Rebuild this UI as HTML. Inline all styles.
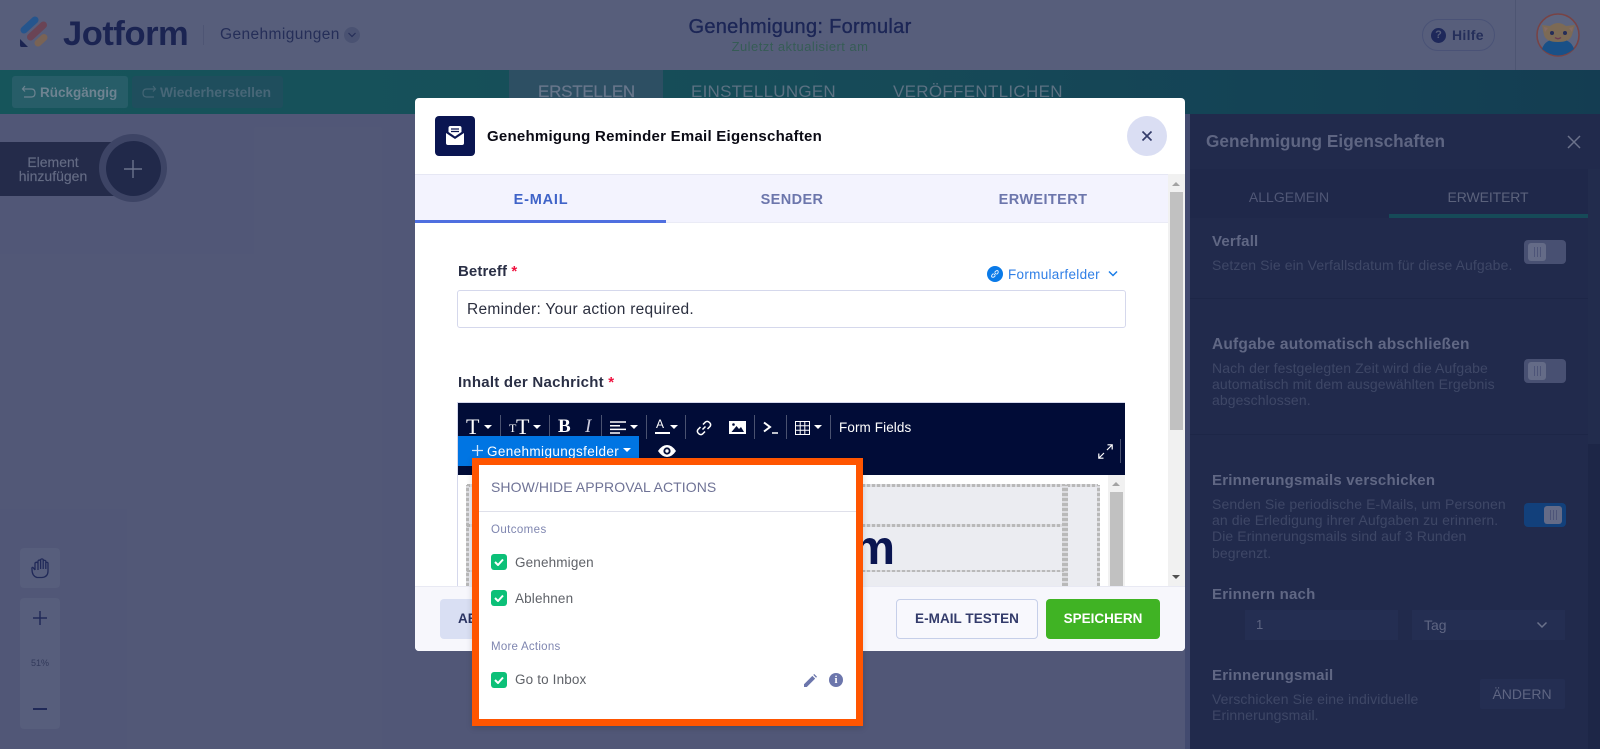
<!DOCTYPE html>
<html lang="de"><head><meta charset="utf-8"><title>Jotform Genehmigung</title>
<style>
html,body{margin:0;padding:0}
body{width:1600px;height:749px;overflow:hidden;position:relative;background:#5e6589;font-family:"Liberation Sans",sans-serif}
div,span,svg{position:absolute}
.t{white-space:nowrap;line-height:20px}
.c{transform:translateX(-50%)}
.b{font-weight:bold}
.sep{width:1px;height:24px;top:415px;background:#4a5270}
.caret{width:0;height:0;border-left:4.5px solid transparent;border-right:4.5px solid transparent;border-top:4.5px solid #fff;top:425px}
.ph{color:#6f7798;font-size:15px;font-weight:bold;letter-spacing:.2px}
.pd{color:#485276;font-size:14px;line-height:16.2px;white-space:nowrap;letter-spacing:.1px}
.tog{width:42px;height:24px;border-radius:4px;background:#535c83}
.tog i{position:absolute;left:4px;top:3px;width:18px;height:18px;border-radius:3px;display:block;background:repeating-linear-gradient(90deg,#59618a 0 1px,transparent 1px 3px) center/7px 10px no-repeat,#737b9b}
.cb{width:16px;height:16px;border-radius:3px;background:#0cc078;left:491px}
.lb{left:515px;color:#5f6268;font-size:13.5px;letter-spacing:.15px}
.dh{height:3px;background:repeating-linear-gradient(90deg,#b9b9b9 0 3px,#dcdce0 3px 5px)}
.dv{width:3px;background:repeating-linear-gradient(0deg,#b9b9b9 0 3px,#dcdce0 3px 5px)}
</style></head><body>

<!-- header -->
<div style="left:0;top:0;width:1600px;height:70px;background:#646d8e"></div>
<svg style="left:18px;top:15px" width="30" height="34" viewBox="0 0 30 34">
<path d="M6 15 L17 5" stroke="#2b62a3" stroke-width="7" stroke-linecap="round"/>
<path d="M12.5 22 L25.5 10" stroke="#7a4f62" stroke-width="7" stroke-linecap="round"/>
<path d="M20 28 L26 22.5" stroke="#8b7262" stroke-width="7" stroke-linecap="round"/>
<path d="M2 24 L10 32 H3.5 Q2 32 2 30 Z" fill="#1f2a5e"/>
</svg>
<div class="t b" style="left:63px;top:19px;font-size:34.5px;line-height:30px;color:#1f2a5f;letter-spacing:-.45px">Jotform</div>
<div style="left:203px;top:25px;width:1px;height:20px;background:#5a6286"></div>
<div class="t" style="left:220px;top:25px;font-size:15.5px;color:#2b3566;letter-spacing:.4px">Genehmigungen</div>
<div style="left:344px;top:27px;width:16px;height:16px;border-radius:50%;background:#565f83"></div>
<svg style="left:347px;top:31px" width="10" height="8" viewBox="0 0 10 8"><path d="M1.5 2 L5 5.5 L8.5 2" fill="none" stroke="#2b3566" stroke-width="1.2"/></svg>
<div class="t c" style="left:800px;top:17px;font-size:20px;color:#212c63;letter-spacing:.3px;-webkit-text-stroke:.35px #212c63">Genehmigung: Formular</div>
<div class="t c" style="left:800px;top:37px;font-size:13px;color:#3f6a63;letter-spacing:.45px">Zuletzt aktualisiert am</div>
<div style="left:1422px;top:19px;width:71px;height:30px;border:1px solid #555f88;border-radius:16px"></div>
<div style="left:1431px;top:28px;width:15px;height:15px;border-radius:50%;background:#232e68;color:#646d8e;font-size:11px;line-height:15px;text-align:center;font-weight:bold">?</div>
<div class="t b" style="left:1452px;top:25px;font-size:14px;color:#2b3668;letter-spacing:.3px">Hilfe</div>
<div style="left:1515px;top:0;width:1px;height:70px;background:#596283"></div>
<svg style="left:1536px;top:13px" width="44" height="44" viewBox="0 0 44 44">
<circle cx="22" cy="22" r="21" fill="#6b7494" stroke="#8a4e50" stroke-width="1.6"/>
<path d="M6 36 Q9 26 22 26 Q35 26 38 36 Q30 42.5 22 42.5 Q14 42.5 6 36Z" fill="#1d5c9c"/>
<path d="M6 12 L14 13 Q22 7 30 13 L39 12 L36 22 Q34 29 22 29 Q10 29 8 22Z" fill="#8f7a62"/>
<path d="M8 14 L12 15 L9 19Z M37 14 L33 15 L36 19Z" fill="#9a7a72"/>
<circle cx="16" cy="20" r="2" fill="#2a3466"/><circle cx="29" cy="20" r="2" fill="#2a3466"/>
<path d="M19 24.500 Q22 27 25 24.500" fill="none" stroke="#7a4460" stroke-width="1.400"/>
</svg>

<!-- teal bar -->
<div style="left:0;top:70px;width:1600px;height:44px;background:linear-gradient(90deg,#1a6269,#1a5766 50%,#17475f)"></div>
<div style="left:12px;top:76px;width:116px;height:32px;border-radius:3px;background:#2d6b78"></div>
<svg style="left:21px;top:84px" width="16" height="16" viewBox="0 0 16 16"><path d="M4 2 L1.5 5 L4 7.5 M2 5 H10.5 Q14 5 14 9 Q14 13 10.5 13 H3" fill="none" stroke="#7d97a6" stroke-width="1.2"/></svg>
<div class="t b" style="left:40px;top:83px;font-size:13.5px;color:#7f97a7">Rückgängig</div>
<div style="left:132px;top:76px;width:151px;height:32px;border-radius:3px;background:#245a6b"></div>
<svg style="left:141px;top:84px" width="16" height="16" viewBox="0 0 16 16"><path d="M12 2 L14.5 5 L12 7.5 M14 5 H5.5 Q2 5 2 9 Q2 13 5.5 13 H13" fill="none" stroke="#4e7486" stroke-width="1.2"/></svg>
<div class="t b" style="left:160px;top:83px;font-size:13.8px;color:#527689">Wiederherstellen</div>
<div style="left:509px;top:70px;width:154px;height:44px;background:#345b72"></div>
<div class="t" style="left:538px;top:82px;font-size:17px;color:#7888a0;letter-spacing:-.25px;-webkit-text-stroke:.2px #7888a0">ERSTELLEN</div>
<div class="t" style="left:691px;top:82px;font-size:17px;color:#6a8296;letter-spacing:.25px">EINSTELLUNGEN</div>
<div class="t" style="left:893px;top:82px;font-size:17px;color:#6a8296;letter-spacing:.3px">VERÖFFENTLICHEN</div>

<!-- canvas left -->
<div style="left:0;top:142px;width:130px;height:54px;background:#2a3256"></div>
<div style="left:99px;top:134px;width:68px;height:68px;border-radius:50%;background:#474f75"></div>
<div style="left:106px;top:141px;width:55px;height:55px;border-radius:50%;background:#263056"></div>
<div class="t c" style="left:53px;top:155px;font-size:14px;line-height:14px;color:#737b98;text-align:center;-webkit-text-stroke:.15px #737b98">Element<br>hinzufügen</div>
<svg style="left:123px;top:159px" width="20" height="20"><path d="M10 1V19M1 10H19" stroke="#7b83a0" stroke-width="1.4"/></svg>
<div style="left:20px;top:548px;width:40px;height:40px;border-radius:4px;background:#656c8f"></div>
<svg style="left:30px;top:557px" width="20" height="22" viewBox="0 0 20 22"><path d="M5 13 L3 10.5 Q1.5 10 2 12.5 Q2 19 7 20.5 H12 Q18 20 18 14 V6 Q17 4.5 15.8 6 V4 Q14.5 2.5 13.2 4 V2.5 Q12 1.2 10.6 2.5 V3.5 Q9 2.5 8 4 V12 M8 5 V13 M10.6 3 V12 M13.2 4 V12 M15.8 6 V12 M5 13 V6 Q6.5 4.5 8 6" fill="none" stroke="#253066" stroke-width="1.3"/></svg>
<div style="left:20px;top:598px;width:40px;height:131px;border-radius:4px;background:#656c8f"></div>
<svg style="left:33px;top:611px" width="14" height="14"><path d="M7 0V14M0 7H14" stroke="#253066" stroke-width="1.5"/></svg>
<div class="t c" style="left:40px;top:653px;font-size:9px;color:#3a4369">51%</div>
<div style="left:33px;top:708px;width:14px;height:1.5px;background:#253066"></div>

<!-- right panel -->
<div style="left:1185px;top:114px;width:5px;height:635px;background:#4c5580"></div>
<div style="left:1190px;top:114px;width:410px;height:635px;background:#263158"></div>
<div style="left:1588px;top:169px;width:12px;height:275px;background:#283359"></div>
<div style="left:1588px;top:444px;width:12px;height:305px;background:#222c52"></div>
<div class="t b" style="left:1206px;top:131px;font-size:17.200px;color:#6d7596;letter-spacing:.05px">Genehmigung Eigenschaften</div>
<svg style="left:1567px;top:135px" width="14" height="14"><path d="M1 1L13 13M13 1L1 13" stroke="#7b83a0" stroke-width="1.5"/></svg>
<div style="left:1190px;top:169px;width:398px;height:49px;background:#242e55"></div>
<div class="t c" style="left:1289px;top:187px;font-size:14px;color:#5c6588">ALLGEMEIN</div>
<div class="t c" style="left:1488px;top:187px;font-size:14px;color:#69718f;letter-spacing:-.1px">ERWEITERT</div>
<div style="left:1389px;top:214px;width:199px;height:4px;background:#1a5566"></div>
<div class="t ph" style="left:1212px;top:232px">Verfall</div>
<div class="pd" style="left:1212px;top:257px">Setzen Sie ein Verfallsdatum für diese Aufgabe.</div>
<div class="tog" style="left:1524px;top:240px"><i></i></div>
<div style="left:1190px;top:298px;width:398px;height:1px;background:#222c52"></div>
<div class="t ph" style="left:1212px;top:335px;font-size:15.500px">Aufgabe automatisch abschließen</div>
<div class="pd" style="left:1212px;top:360px">Nach der festgelegten Zeit wird die Aufgabe<br>automatisch mit dem ausgewählten Ergebnis<br>abgeschlossen.</div>
<div class="tog" style="left:1524px;top:359px"><i></i></div>
<div style="left:1190px;top:434px;width:398px;height:1px;background:#222c52"></div>
<div class="t ph" style="left:1212px;top:471px">Erinnerungsmails verschicken</div>
<div class="pd" style="left:1212px;top:496px">Senden Sie periodische E-Mails, um Personen<br>an die Erledigung ihrer Aufgaben zu erinnern.<br>Die Erinnerungsmails sind auf 3 Runden<br>begrenzt.</div>
<div class="tog" style="left:1524px;top:503px;background:#154a8e"><i style="left:20px"></i></div>
<div class="t ph" style="left:1212px;top:585px">Erinnern nach</div>
<div style="left:1245px;top:610px;width:153px;height:30px;background:#2a355f"></div>
<div class="t" style="left:1256px;top:615px;font-size:13px;color:#6d7596">1</div>
<div style="left:1412px;top:610px;width:153px;height:30px;background:#2a355f"></div>
<div class="t" style="left:1424px;top:615px;font-size:14px;color:#6d7596">Tag</div>
<svg style="left:1536px;top:621px" width="12" height="9"><path d="M1.5 1.5L6 6L10.5 1.5" fill="none" stroke="#7b83a0" stroke-width="1.5"/></svg>
<div class="t ph" style="left:1212px;top:666px">Erinnerungsmail</div>
<div class="pd" style="left:1212px;top:691px">Verschicken Sie eine individuelle<br>Erinnerungsmail.</div>
<div style="left:1480px;top:679px;width:85px;height:30px;border-radius:2px;background:#2a355f"></div>
<div class="t c" style="left:1522px;top:684px;font-size:14px;color:#6d7596">ÄNDERN</div>

<!-- dim overlay -->
<div style="left:0;top:0;width:1600px;height:749px;background:rgba(0,0,0,.13)"></div>

<!-- modal -->
<div style="left:415px;top:98px;width:770px;height:553px;background:#fff;border-radius:4px;overflow:hidden"></div>
<div style="left:435px;top:116px;width:40px;height:40px;border-radius:4px;background:#0a1551"></div>
<svg style="left:445px;top:125px" width="20" height="21" viewBox="0 0 20 21"><path d="M3.500 7 V3 Q3.500 1 5.500 1 H14.500 Q16.500 1 16.500 3 V7 L10 11.500Z" fill="#fff"/><path d="M6 4H14M6 6.500H14" stroke="#0a1551" stroke-width="1.300"/><path d="M1 8 L10 14 L19 8 V18 Q19 20 17 20 H3 Q1 20 1 18Z" fill="#fff"/></svg>
<div class="t b" style="left:487px;top:127px;font-size:15px;color:#0a0a14;letter-spacing:.25px">Genehmigung Reminder Email Eigenschaften</div>
<div style="left:1127px;top:116px;width:40px;height:40px;border-radius:50%;background:#dadef3"></div>
<svg style="left:1142px;top:131px" width="10" height="10"><path d="M.5 .5L9.500 9.500M9.500 .5L.5 9.500" stroke="#343c6a" stroke-width="1.700"/></svg>
<div style="left:415px;top:174px;width:753px;height:48px;background:#f3f3fe;border-top:1px solid #e6e7f4;box-sizing:border-box"></div>
<div style="left:415px;top:220px;width:251px;height:3px;background:#4f6fe0"></div>
<div style="left:666px;top:222px;width:502px;height:1px;background:#eaebf6"></div>
<div class="t c b" style="left:541px;top:190px;font-size:14.500px;color:#3f63c8;letter-spacing:.8px">E-MAIL</div>
<div class="t c b" style="left:792px;top:190px;font-size:14.500px;color:#6c76ac;letter-spacing:.4px">SENDER</div>
<div class="t c b" style="left:1043px;top:190px;font-size:14.500px;color:#6c76ac;letter-spacing:.4px">ERWEITERT</div>
<!-- modal scrollbar -->
<div style="left:1168px;top:174px;width:17px;height:412px;background:#f1f1f1"></div>
<div style="left:1170px;top:192px;width:13px;height:238px;background:#c1c1c1"></div>
<div style="left:1172px;top:182px;width:0;height:0;border-left:4px solid transparent;border-right:4px solid transparent;border-bottom:4px solid #a3a3a3"></div>
<div style="left:1172px;top:575px;width:0;height:0;border-left:4px solid transparent;border-right:4px solid transparent;border-top:4px solid #505050"></div>

<div class="t b" style="left:458px;top:262px;font-size:15px;color:#2a2f45;letter-spacing:.1px">Betreff <span style="position:static;color:#f0123f">*</span></div>
<div style="left:987px;top:266px;width:16px;height:16px;border-radius:50%;background:#0a7ae8"></div>
<svg style="left:990px;top:269px" width="10" height="10" viewBox="0 0 10 10"><path d="M4 6L6 4M3.500 4.500L2 6Q1 7.500 2 8T4 8L5.500 6.500M4.500 3.500L6 2Q7.500 1 8 2T8 4L6.500 5.500" fill="none" stroke="#dbeafc" stroke-width="1"/></svg>
<div class="t" style="left:1008px;top:265px;font-size:13.500px;color:#2f7fe6;letter-spacing:.3px">Formularfelder</div>
<svg style="left:1108px;top:270px" width="10" height="8"><path d="M1 1.500L5 5.500L9 1.500" fill="none" stroke="#1a7de8" stroke-width="1.500"/></svg>
<div style="left:457px;top:290px;width:669px;height:38px;box-sizing:border-box;border:1px solid #d5d8ec;border-radius:3px;background:#fff"></div>
<div class="t" style="left:467px;top:300px;font-size:15.500px;color:#2b2f3f;letter-spacing:.29px">Reminder: Your action required.</div>
<div class="t b" style="left:458px;top:373px;font-size:15px;color:#2a2f45;letter-spacing:.25px">Inhalt der Nachricht <span style="position:static;color:#f0123f">*</span></div>

<!-- editor -->
<div style="left:457px;top:402px;width:668px;height:184px;background:#fff;box-sizing:border-box;border:1px solid #d5d8ec;border-bottom:0"></div>
<div style="left:458px;top:403px;width:667px;height:72px;background:#010c37"></div>
<div style="left:467px;top:485px;width:631px;height:101px;background:#ebecf1"></div>
<div class="dh" style="left:467px;top:484px;width:631px"></div>
<div class="dv" style="left:466px;top:485px;height:101px"></div>
<div class="dv" style="left:1097px;top:485px;height:101px"></div>
<div class="dh" style="left:467px;top:524px;width:597px"></div>
<div class="dv" style="left:1062px;top:485px;height:101px"></div>
<div class="dv" style="left:1065px;top:485px;height:101px"></div>
<div class="dh" style="left:467px;top:570px;width:597px;height:2px"></div>
<div class="t b" style="left:800px;top:528px;width:95px;font-size:48px;line-height:42px;color:#0a1551;text-align:right">m</div>
<div style="left:1108px;top:475px;width:17px;height:111px;background:#f1f1f1"></div>
<div style="left:1110px;top:492px;width:13px;height:94px;background:#c1c1c1"></div>
<div style="left:1112px;top:482px;width:0;height:0;border-left:4px solid transparent;border-right:4px solid transparent;border-bottom:4px solid #a3a3a3"></div>

<!-- toolbar -->
<div class="t" style="left:466px;top:415px;font:22px/24px 'Liberation Serif',serif;color:#fff">T</div>
<div class="caret" style="left:484px"></div><div class="sep" style="left:500px"></div>
<div class="t" style="left:509px;top:420px;font:12px/16px 'Liberation Serif',serif;color:#fff">T</div>
<div class="t" style="left:516px;top:415px;font:22px/24px 'Liberation Serif',serif;color:#fff">T</div>
<div class="caret" style="left:533px"></div><div class="sep" style="left:549px"></div>
<div class="t b" style="left:558px;top:415px;font:bold 19px/24px 'Liberation Serif',serif;color:#fff">B</div>
<div class="t" style="left:585px;top:415px;font:italic 19px/24px 'Liberation Serif',serif;color:#ccd">I</div>
<div class="sep" style="left:601px"></div>
<svg style="left:610px;top:421px" width="16" height="13"><path d="M0 1H16M0 4.700H10M0 8.400H16M0 12H10" stroke="#fff" stroke-width="1.500"/></svg>
<div class="caret" style="left:630px"></div><div class="sep" style="left:646px"></div>
<div class="t" style="left:656px;top:416px;font-size:12px;line-height:16px;color:#fff">A</div>
<div style="left:655px;top:432px;width:15px;height:2px;background:#fff"></div>
<div class="caret" style="left:670px"></div><div class="sep" style="left:685px"></div>
<svg style="left:696px;top:420px" width="16" height="16" viewBox="0 0 16 16"><path d="M6.500 9.500L9.500 6.500M7 4.500L9.500 2Q11.500 .5 13.500 2.500T14 6.500L11.500 9M9 11.500L6.500 14Q4.500 15.500 2.500 13.500T2 9.500L4.500 7" fill="none" stroke="#fff" stroke-width="1.500"/></svg>
<svg style="left:729px;top:421px" width="17" height="13" viewBox="0 0 17 13"><path d="M0 0H17V13H0Z" fill="#fff"/><path d="M2.500 11L7.500 5L10 8L12 6L15 11Z" fill="#010c37"/><circle cx="4.500" cy="3.500" r="1.300" fill="#010c37"/></svg>
<div class="sep" style="left:754px"></div>
<svg style="left:763px;top:421px" width="15" height="13"><path d="M1 1.500L7 6L1 10.500" fill="none" stroke="#fff" stroke-width="2"/><path d="M9 12H15" stroke="#fff" stroke-width="1.500"/></svg>
<div class="sep" style="left:786px"></div>
<svg style="left:795px;top:421px" width="15" height="14"><path d="M.5 .5H14.500V13.500H.5ZM5.200 .5V13.500M9.800 .5V13.500M.5 4.800H14.500M.5 9.200H14.500" fill="none" stroke="#fff" stroke-width="1"/></svg>
<div class="caret" style="left:814px"></div><div class="sep" style="left:830px"></div>
<div class="t" style="left:839px;top:418px;font-size:13.500px;color:#fff;letter-spacing:.1px">Form Fields</div>
<svg style="left:1098px;top:444px" width="15" height="15" viewBox="0 0 15 15"><path d="M9 6L14 1M9.500 .8H14.200V5.500M6 9L1 14M.8 9.500V14.200H5.500" fill="none" stroke="#fff" stroke-width="1.200"/></svg>
<div style="left:1120px;top:439px;width:1px;height:24px;background:#4a5270"></div>
<div style="left:458px;top:436px;width:181px;height:30px;background:#0075e3"></div>
<svg style="left:472px;top:445px" width="11" height="11"><path d="M5.500 0V11M0 5.500H11" stroke="#cfe4fb" stroke-width="1.300"/></svg>
<div class="t" style="left:487px;top:442px;font-size:13.500px;color:#fff;letter-spacing:.38px">Genehmigungsfelder</div>
<div class="caret" style="left:623px;top:448px"></div>
<svg style="left:658px;top:444px" width="18" height="14" viewBox="0 0 18 14"><path d="M0 7Q4 1 9 1T18 7Q14 13 9 13T0 7Z" fill="#fff"/><circle cx="9" cy="7" r="3.600" fill="#010c37"/><circle cx="9" cy="7" r="1.700" fill="#fff"/></svg>

<!-- footer -->
<div style="left:415px;top:586px;width:770px;height:65px;background:#f7f7fc;border-top:1px solid #e8e9f3;box-sizing:border-box;border-radius:0 0 4px 4px"></div>
<div style="left:440px;top:599px;width:80px;height:40px;border-radius:4px;background:#d9dff3"></div>
<div class="t b" style="left:458px;top:609px;font-size:13.500px;color:#2b3462">AB</div>
<div style="left:896px;top:599px;width:142px;height:40px;box-sizing:border-box;border:1px solid #c6cfe9;border-radius:4px;background:#f8f8fd"></div>
<div class="t c b" style="left:967px;top:609px;font-size:13.500px;color:#333b6b;letter-spacing:.05px">E-MAIL TESTEN</div>
<div style="left:1046px;top:599px;width:114px;height:40px;border-radius:4px;background:#40b324"></div>
<div class="t c b" style="left:1103px;top:609px;font-size:13.500px;color:#fff;letter-spacing:0">SPEICHERN</div>

<!-- popup -->
<div style="left:472px;top:458px;width:391px;height:268px;box-sizing:border-box;border:7px solid #ff5500;background:#fff;box-shadow:0 2px 6px rgba(0,0,0,.15)"></div>
<div class="t" style="left:491px;top:477px;font-size:14px;color:#6f7396;letter-spacing:.08px">SHOW/HIDE APPROVAL ACTIONS</div>
<div style="left:479px;top:511px;width:377px;height:1px;background:#dfe0ea"></div>
<div class="t" style="left:491px;top:520px;font-size:11.500px;color:#7f86b0;letter-spacing:.4px">Outcomes</div>
<div class="cb" style="top:554px"></div>
<svg style="left:494px;top:558px" width="10" height="8"><path d="M1 4L4 7L9 1.500" fill="none" stroke="#fff" stroke-width="2"/></svg>
<div class="t lb" style="top:553px">Genehmigen</div>
<div class="cb" style="top:590px"></div>
<svg style="left:494px;top:594px" width="10" height="8"><path d="M1 4L4 7L9 1.500" fill="none" stroke="#fff" stroke-width="2"/></svg>
<div class="t lb" style="top:589px">Ablehnen</div>
<div class="t" style="left:491px;top:637px;font-size:11.500px;color:#7f86b0;letter-spacing:.25px">More Actions</div>
<div class="cb" style="top:672px"></div>
<svg style="left:494px;top:676px" width="10" height="8"><path d="M1 4L4 7L9 1.500" fill="none" stroke="#fff" stroke-width="2"/></svg>
<div class="t lb" style="top:670px">Go to Inbox</div>
<svg style="left:804px;top:674px" width="13" height="13" viewBox="0 0 14 14"><path d="M0 14V11L9 2L12 5L3 14ZM10 1L11 0L14 3L13 4Z" fill="#6c76ac"/></svg>
<div style="left:829px;top:673px;width:14px;height:14px;border-radius:50%;background:#6c76ac;color:#fff;font-size:11px;line-height:14px;text-align:center;font-weight:bold;font-family:'Liberation Serif',serif">i</div>
</body></html>
